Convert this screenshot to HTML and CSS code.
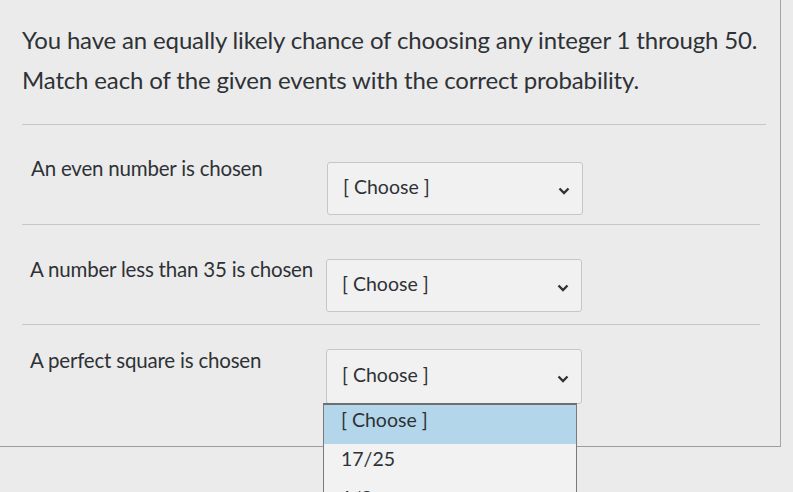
FILE: index.html
```html
<!DOCTYPE html>
<html>
<head>
<meta charset="utf-8">
<link rel="stylesheet" href="styles.css">
</head>
<body>
<div class="panel">
  <div class="question">
    <p>You have an equally likely chance of choosing any integer 1 through 50.</p>
    <p>Match each of the given events with the correct probability.</p>
  </div>
  <div class="row">
    <div class="label">An even number is chosen</div>
    <div class="select"><span>[ Choose ]</span><svg class="chev" viewBox="0 0 12 8"><path d="M1.5 1.5 L6 6 L10.5 1.5" fill="none" stroke="#333" stroke-width="2.4"/></svg></div>
  </div>
  <div class="row">
    <div class="label">A number less than 35 is chosen</div>
    <div class="select"><span>[ Choose ]</span><svg class="chev" viewBox="0 0 12 8"><path d="M1.5 1.5 L6 6 L10.5 1.5" fill="none" stroke="#333" stroke-width="2.4"/></svg></div>
  </div>
  <div class="row last">
    <div class="label">A perfect square is chosen</div>
    <div class="select-wrap">
      <div class="select"><span>[ Choose ]</span><svg class="chev" viewBox="0 0 12 8"><path d="M1.5 1.5 L6 6 L10.5 1.5" fill="none" stroke="#333" stroke-width="2.4"/></svg></div>
      <ul class="menu">
        <li class="active">[ Choose ]</li>
        <li>17/25</li>
        <li>1/2</li>
      </ul>
    </div>
  </div>
</div>
</body>
</html>
```

FILE: styles.css
```css
html, body {
  margin: 0;
  padding: 0;
  background: #ebebeb;
  height: 492px;
  overflow: hidden;
}
body {
  font-family: Lato, "Liberation Sans", sans-serif;
  color: #2e3236;
}
.panel {
  width: 758px;
  padding-left: 22px;
  border-right: 1px solid #a4a4a4;
  border-bottom: 1px solid #9c9c9c;
}
.question {
  padding-top: 20px;
  padding-bottom: 24px;
  border-bottom: 1px solid #c6c6c6;
  margin-right: 14px;
}
.question p {
  margin: 0;
  font-size: 24px;
  line-height: 40px;
  letter-spacing: -0.15px;
  white-space: nowrap;
}
.row {
  display: flex;
  align-items: flex-start;
  height: 99px;
  border-bottom: 1px solid #c6c6c6;
  margin-right: 20px;
}
.row.last {
  border-bottom: none;
  height: 121px;
}
.label {
  width: 296px;
  padding-left: 9px;
  padding-top: 30px;
  font-size: 20.5px;
  line-height: 26px;
  letter-spacing: -0.2px;
  white-space: nowrap;
}
.row:nth-child(3) .label { padding-left: 8px; padding-top: 31px; }
.row.last .label { padding-left: 8px; padding-top: 22px; }
.select {
  margin-top: 37px;
  width: 256px;
  height: 53px;
  box-sizing: border-box;
  border: 1px solid #c3c7ca;
  border-radius: 3px;
  background: #f1f1f1;
  display: flex;
  align-items: center;
  justify-content: space-between;
  padding: 0 12px 0 15px;
  font-size: 19.5px;
}
.select span { margin-top: -5px; }
.row:nth-child(3) .select { margin-top: 34px; }
.select-wrap {
  position: relative;
  margin-top: 24px;
}
.select-wrap .select { margin-top: 0; height: 55px; }
.chev {
  width: 12px;
  height: 8px;
  margin-top: 4px;
}
.menu {
  position: absolute;
  left: -3px;
  top: 54px;
  width: 254px;
  margin: 0;
  padding: 0;
  list-style: none;
  background: #f2f2f2;
  border: 1px solid #7a7a7a;
  border-top: 2px solid #6e6e6e;
  box-sizing: border-box;
  font-size: 19.5px;
}
.menu li {
  height: 39px;
  line-height: 30px;
  padding-left: 17px;
}
.menu li.active {
  background: #b3d6ea;
}
```
